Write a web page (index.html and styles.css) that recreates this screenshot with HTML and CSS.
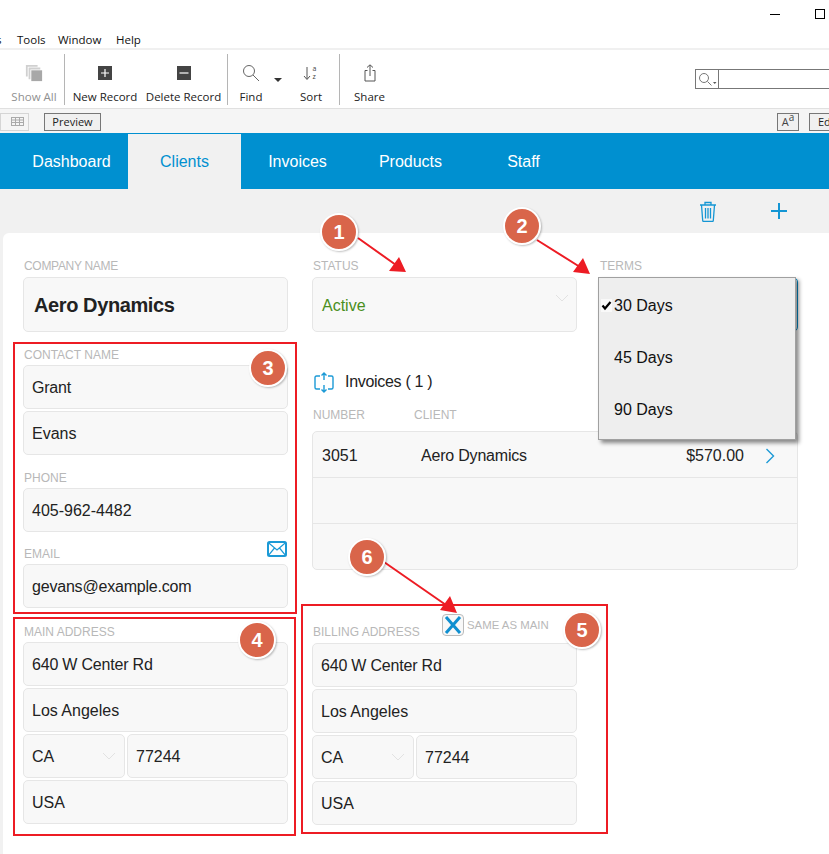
FILE: index.html
```html
<!DOCTYPE html>
<html lang="en">
<head>
    <meta charset="UTF-8">
    <meta name="viewport" content="width=device-width, initial-scale=1.0">
    <title>Clients</title>
    <link rel="stylesheet" href="styles.css">
</head>
<body>
    <div class="titlebar">
        <div class="window-controls">
            <span class="win-min"></span>
            <span class="win-max"></span>
        </div>
        <div class="menu">
            <span class="menu-cut">s</span>
            <span class="menu-tools">Tools</span>
            <span class="menu-window">Window</span>
            <span class="menu-help">Help</span>
        </div>
    </div>

    <div class="toolbar">
        <div class="tool tool-showall dim">
            <svg width="20" height="20" viewBox="0 0 20 20"><path d="M1 1h13v2H3v11H1z M4 4h13v2H6v11H4z" fill="#d0d0d0"/><rect x="7" y="7" width="12" height="12" fill="#a8a8a8"/></svg>
            <span>Show All</span>
        </div>
        <div class="tool-sep"></div>
        <div class="tool tool-new">
            <svg width="14" height="14" viewBox="0 0 14 14"><rect width="14" height="14" fill="#444"/><path d="M7 3v8M3 7h8" stroke="#fff" stroke-width="1.2"/></svg>
            <span>New Record</span>
        </div>
        <div class="tool tool-delete">
            <svg width="14" height="14" viewBox="0 0 14 14"><rect width="14" height="14" fill="#444"/><path d="M2.5 7h9" stroke="#fff" stroke-width="1.2"/></svg>
            <span>Delete Record</span>
        </div>
        <div class="tool-sep sep-find"></div>
        <div class="tool tool-find">
            <svg width="18" height="18" viewBox="0 0 18 18"><circle cx="7" cy="7" r="5.5" fill="none" stroke="#666"/><path d="M11 11l6 6" stroke="#666"/></svg>
            <span>Find</span>
        </div>
        <div class="caret"></div>
        <div class="tool tool-sort">
            <svg width="16" height="18" viewBox="0 0 16 18"><path d="M4 3v12M1 12l3 3.5L7 12" fill="none" stroke="#555"/><text x="9.5" y="7" class="sort-letter">a</text><text x="9.5" y="15" class="sort-letter">z</text></svg>
            <span>Sort</span>
        </div>
        <div class="tool-sep"></div>
        <div class="tool tool-share">
            <svg width="14" height="18" viewBox="0 0 14 18"><path d="M4.5 6.5H2v10.500h10V6.500H9.500M7 12V1M4 3.500L7 .8l3 2.700" fill="none" stroke="#555"/></svg>
            <span>Share</span>
        </div>
        <div class="quickfind">
            <div class="quickfind-icon">
                <svg width="19" height="15" viewBox="0 0 19 15"><circle cx="6" cy="6" r="4.500" fill="none" stroke="#777"/><path d="M9.500 9.500l4 4" stroke="#777"/><path d="M15 10h3.500l-1.750 2z" fill="#555"/></svg>
            </div>
        </div>
    </div>

    <div class="layoutbar">
        <div class="mode-btn mode-table">
            <svg width="13" height="9" viewBox="0 0 13 9"><path d="M0 .5h13M0 3h13M0 5.500h13M0 8.500h13M.5 0v9M4.500 0v9M8.500 0v9M12.500 0v9" stroke="#aaa" fill="none"/></svg>
        </div>
        <div class="mode-btn mode-preview">Preview</div>
        <div class="mode-btn mode-aa">A<sup>a</sup></div>
        <div class="mode-btn mode-edit">Edit</div>
    </div>

    <nav class="nav">
        <a class="nav-tab">Dashboard</a>
        <a class="nav-tab active">Clients</a>
        <a class="nav-tab">Invoices</a>
        <a class="nav-tab">Products</a>
        <a class="nav-tab">Staff</a>
    </nav>

    <div class="actions">
        <svg class="action-trash" width="18" height="21" viewBox="0 0 18 21"><path d="M1 4h16M6 4V1.500h6V4M2.500 4l1.200 15.500q.1 1 1 1h8.600q.9 0 1-1L15.500 4M6.500 7v10.500M9 7v10.500M11.500 7v10.500" fill="none" stroke="#1496d4" stroke-width="1.300"/></svg>
        <svg class="action-plus" width="16" height="16" viewBox="0 0 16 16"><path d="M8 0v16M0 8h16" stroke="#1496d4" stroke-width="2"/></svg>
    </div>

    <main class="card">
        <section class="col-left">
            <div class="label label-company">Company Name</div>
            <div class="field field-lg company">Aero Dynamics</div>

            <div class="label label-contact">Contact Name</div>
            <div class="stack">
                <div class="field tight">Grant</div>
                <div class="field">Evans</div>
            </div>

            <div class="label label-contact">Phone</div>
            <div class="field">405-962-4482</div>

            <div class="label-row">
                <div class="label">Email</div>
                <svg class="mail-icon" width="20" height="16" viewBox="0 0 20 16"><rect x="1" y="1" width="18" height="14" rx="1.500" fill="none" stroke="#1c9ad6" stroke-width="2"/><path d="M1.500 1.800L10 9l8.500-7.200M1.500 14.300L7.500 7M18.500 14.300L12.500 7" fill="none" stroke="#1c9ad6" stroke-width="1.200"/></svg>
            </div>
            <div class="field tight">gevans@example.com</div>

            <div class="label label-address">Main Address</div>
            <div class="stack">
                <div class="field tight">640 W Center Rd</div>
                <div class="field">Los Angeles</div>
                <div class="state-row">
                    <div class="field field-select state">CA <svg class="chevron" width="14" height="8" viewBox="0 0 14 8"><path d="M1 1l6 6 6-6" fill="none" stroke="#e2e2e2"/></svg></div>
                    <div class="field zip">77244</div>
                </div>
                <div class="field">USA</div>
            </div>
        </section>

        <section class="col-right">
            <div class="top-row">
                <div class="status">
                    <div class="label">Status</div>
                    <div class="field field-lg field-select active-text">Active <svg class="chevron" width="14" height="8" viewBox="0 0 14 8"><path d="M1 1l6 6 6-6" fill="none" stroke="#e2e2e2"/></svg></div>
                </div>
                <div class="terms">
                    <div class="label label-terms">Terms</div>
                    <div class="field field-lg terms-field"></div>
                    <div class="dropdown">
                        <div class="dropdown-item">
                            <svg class="check" width="11" height="13" viewBox="0 0 11 13"><rect width="11" height="13" fill="#f9f9f9"/><path d="M1.500 6.500l2.500 3L9.500 3" fill="none" stroke="#000" stroke-width="2.200"/></svg>
                            30 Days
                        </div>
                        <div class="dropdown-item">45 Days</div>
                        <div class="dropdown-item">90 Days</div>
                    </div>
                </div>
            </div>

            <div class="invoices-head">
                <svg width="20" height="21" viewBox="0 0 20 21"><path d="M6 4H2.500Q1 4 1 5.500v10Q1 17 2.500 17H6M14 4h3.500Q19 4 19 5.500v10q0 1.500-1.500 1.500H14M10 1v7M7.500 3.500L10 1l2.500 2.500M10 13v7M7.500 17.500L10 20l2.500-2.500" fill="none" stroke="#1c9ad6" stroke-width="1.400"/></svg>
                <span>Invoices ( 1 )</span>
            </div>
            <div class="invoice-cols">
                <div class="label col-number">Number</div>
                <div class="label">Client</div>
            </div>
            <div class="invoice-table">
                <div class="invoice-row">
                    <span class="inv-number">3051</span>
                    <span class="inv-client">Aero Dynamics</span>
                    <span class="inv-amount">$570.00</span>
                    <svg class="inv-arrow" width="10" height="16" viewBox="0 0 10 16"><path d="M1.500 1l7 7-7 7" fill="none" stroke="#1c9ad6" stroke-width="1.400"/></svg>
                </div>
                <div class="invoice-row"></div>
                <div class="invoice-row"></div>
            </div>

            <div class="billing">
                <div class="billing-head">
                    <div class="label billing-label">Billing Address</div>
                    <div class="same-box">
                        <svg width="18" height="18" viewBox="0 0 18 18"><path d="M2 1l14 16M16 1L2 17" stroke="#0f8fd0" stroke-width="3"/></svg>
                    </div>
                    <div class="same-text">Same as Main</div>
                </div>
                <div class="stack">
                    <div class="field tight">640 W Center Rd</div>
                    <div class="field">Los Angeles</div>
                    <div class="state-row">
                        <div class="field field-select state">CA <svg class="chevron" width="14" height="8" viewBox="0 0 14 8"><path d="M1 1l6 6 6-6" fill="none" stroke="#e2e2e2"/></svg></div>
                        <div class="field zip">77244</div>
                    </div>
                    <div class="field">USA</div>
                </div>
            </div>
        </section>
    </main>

    <!-- callouts drawn over the screen -->
    <div class="redbox redbox-3"></div>
    <div class="redbox redbox-4"></div>
    <div class="redbox redbox-5"></div>
    <svg class="arrows" width="829" height="854" viewBox="0 0 829 854">
        <path d="M358 238L396 265M537 240L580 267M384 562L446 605" stroke="#ed1c24" stroke-width="2"/>
        <path d="M406 272L389 271L399 257Z M590 274L573 272L583 258Z M457 613L440 610L450 596Z" fill="#ed1c24"/>
    </svg>
    <div class="badge badge-1">1</div>
    <div class="badge badge-2">2</div>
    <div class="badge badge-3">3</div>
    <div class="badge badge-4">4</div>
    <div class="badge badge-5">5</div>
    <div class="badge badge-6">6</div>
</body>
</html>
```

FILE: styles.css
```css
html, body {
    margin: 0;
    padding: 0;
}
body {
    position: relative;
    width: 829px;
    height: 854px;
    overflow: hidden;
    background-color: #f1f1f1;
    font-family: "Liberation Sans", Arial, sans-serif;
    font-size: 16px;
    color: #222;
}

/* window chrome */
.titlebar {
    position: relative;
    height: 48px;
    border-bottom: 2px solid #f0f0f0;
    background-color: #fff;
}
.window-controls {
    display: flex;
    justify-content: flex-end;
    align-items: center;
    height: 28px;
    padding-right: 4px;
}
.win-min {
    width: 10px;
    height: 1px;
    background-color: #000;
    margin-right: 35px;
}
.win-max {
    width: 8px;
    height: 8px;
    border: 1px solid #000;
}
.menu {
    display: flex;
    font-family: "Open Sans", sans-serif;
    font-size: 11.5px;
    line-height: 16px;
    color: #111;
    padding-top: 4px;
}
.menu-cut {
    margin-left: -4px;
    width: 21px;
}
.menu-tools {
    width: 41px;
}
.menu-window {
    width: 58px;
}

/* toolbar */
.toolbar {
    display: flex;
    height: 58px;
    padding-left: 4px;
    border-bottom: 1px solid #e0e0e0;
    background-color: #fff;
    font-family: "Open Sans", sans-serif;
    font-size: 11.5px;
    color: #222;
}
.tool {
    display: flex;
    flex-direction: column;
    align-items: center;
    flex-shrink: 0;
    height: 58px;
    white-space: nowrap;
}
.tool svg {
    margin-top: 14px;
    height: 18px;
}
.tool span {
    position: absolute;
    top: 89px;
}
.tool.dim {
    color: #909090;
}
.tool-sep {
    width: 1px;
    height: 51px;
    margin-top: 4px;
    background-color: #b5b5b5;
    flex-shrink: 0;
}
.tool-showall { width: 60px; }
.tool-new { width: 80px; }
.tool-delete { width: 77px; }
.sep-find { margin-left: 5px; }
.tool-find { width: 46px; }
.tool-sort { width: 56px; }
.tool-share { width: 59px; }
.caret {
    width: 9px;
    flex-shrink: 0;
    position: relative;
}
.caret::after {
    content: "";
    position: absolute;
    left: 0;
    top: 28px;
    border-left: 4px solid transparent;
    border-right: 4px solid transparent;
    border-top: 4px solid #333;
}
.sort-letter {
    font-size: 7px;
    fill: #444;
}
.quickfind {
    display: flex;
    flex-shrink: 0;
    width: 138px;
    height: 18px;
    margin: 19px -6px 0 auto;
    border: 1px solid #777;
}
.quickfind-icon {
    width: 23px;
    height: 18px;
    border-right: 1px solid #777;
    padding-left: 2px;
    box-sizing: border-box;
}
.quickfind-icon svg {
    display: block;
    margin-top: 2px;
}

/* layout bar */
.layoutbar {
    display: flex;
    height: 24px;
    background-color: #f5f5f5;
    padding-top: 4px;
    box-sizing: border-box;
}
.mode-btn {
    height: 18px;
    box-sizing: border-box;
    border: 1px solid #777;
    font-family: "Open Sans", sans-serif;
    font-size: 11px;
    line-height: 16px;
    text-align: center;
    background-color: #f0f0f0;
    flex-shrink: 0;
    white-space: nowrap;
    overflow: hidden;
}
.mode-table {
    width: 29px;
    margin-right: 15px;
    border-color: #d5d5d5;
    padding-left: 3px;
    text-align: left;
    background-color: #f5f5f5;
}
.mode-table svg {
    display: block;
    margin: 3px 0 0 7px;
}
.mode-preview {
    width: 57px;
}
.mode-aa {
    width: 22px;
    margin-left: 676px;
    color: #444;
}
.mode-aa sup {
    font-size: 10px;
    line-height: 0;
}
.mode-edit {
    width: 40px;
    margin-left: 10px;
    text-align: left;
    padding-left: 8px;
}

/* nav */
.nav {
    display: flex;
    height: 56px;
    padding-left: 15px;
    background-color: #0090d0;
}
.nav-tab {
    width: 113px;
    height: 56px;
    line-height: 58px;
    text-align: center;
    color: #fff;
}
.nav-tab.active {
    height: 55px;
    margin-top: 1px;
    line-height: 56px;
    background-color: #f1f1f1;
    color: #0090d0;
}

.actions {
    display: flex;
    justify-content: flex-end;
    align-items: center;
    gap: 54px;
    height: 44px;
    padding-right: 42px;
    background-color: #f1f1f1;
}

/* card */
.card {
    display: grid;
    grid-template-columns: 265px 486px;
    column-gap: 24px;
    margin-left: 3px;
    padding: 26px 0 0 20px;
    height: 600px;
    background-color: #fff;
    border-radius: 6px 0 0 0;
}
.label {
    height: 14px;
    margin-left: 1px;
    margin-bottom: 4px;
    font-size: 12px;
    line-height: 14px;
    color: #b8b8b8;
    text-transform: uppercase;
}
.label-company {
    letter-spacing: -0.3px;
}
.label-terms {
    margin-left: 0;
}
.label-contact {
    margin-top: 16px;
    margin-bottom: 3px;
}
.label-address {
    margin-top: 17px;
    margin-bottom: 3px;
}
.label-row {
    display: flex;
    justify-content: space-between;
    align-items: flex-end;
    margin-top: 15px;
    margin-bottom: 3px;
    height: 14px;
}
.label-row .label {
    margin-bottom: 0;
}
.mail-icon {
    margin: 0 1px 4px 0;
}
.field {
    display: flex;
    align-items: center;
    position: relative;
    height: 44px;
    padding: 2px 0 0 8px;
    box-sizing: border-box;
    background-color: #f8f8f8;
    border: 1px solid #e6e6e6;
    border-radius: 5px;
    white-space: nowrap;
}
.field-lg {
    height: 55px;
    padding-left: 9px;
}
.tight {
    letter-spacing: -0.2px;
}
.company {
    padding-left: 10px;
    font-size: 20px;
    font-weight: bold;
    letter-spacing: -0.4px;
}
.stack {
    display: flex;
    flex-direction: column;
    gap: 2px;
}
.state-row {
    display: flex;
    gap: 2px;
}
.state {
    width: 102px;
}
.zip {
    flex: 1;
}
.chevron {
    position: absolute;
    right: 8px;
    top: 17px;
}
.field-lg .chevron {
    top: 16px;
    right: 7px;
}
.active-text {
    color: #4a8f20;
}

/* right column */
.top-row {
    display: flex;
    gap: 23px;
}
.status {
    width: 265px;
}
.terms {
    position: relative;
    width: 198px;
}
.terms-field {
    border-color: #0090d0;
}
.dropdown {
    position: absolute;
    left: -2px;
    top: 18px;
    width: 198px;
    height: 163px;
    box-sizing: border-box;
    background-color: #eee;
    border: 1px solid #a0a0a0;
    box-shadow: 3px 3px 4px rgba(0, 0, 0, 0.45);
}
.dropdown-item {
    position: relative;
    height: 52px;
    line-height: 52px;
    padding-left: 15px;
    color: #111;
}
.dropdown-item:first-child {
    margin-top: 2px;
}
.check {
    position: absolute;
    left: 2px;
    top: 19px;
}
.invoices-head {
    display: flex;
    align-items: center;
    gap: 11px;
    height: 20px;
    margin-top: 40px;
    padding-left: 2px;
    letter-spacing: -0.3px;
}
.invoice-cols {
    display: flex;
    margin-top: 16px;
    margin-bottom: 9px;
}
.invoice-cols .label {
    margin-bottom: 0;
}
.col-number {
    width: 100px;
}
.invoice-table {
    height: 139px;
    box-sizing: border-box;
    background-color: #f8f8f8;
    border: 1px solid #e6e6e6;
    border-radius: 5px;
}
.invoice-row {
    display: flex;
    align-items: center;
    height: 46px;
    border-bottom: 1px solid #e6e6e6;
    box-sizing: border-box;
    padding: 2px 0 0 9px;
}
.invoice-row:last-child {
    border-bottom: none;
}
.inv-number {
    width: 99px;
}
.inv-client {
    width: 220px;
    letter-spacing: -0.2px;
}
.inv-amount {
    width: 103px;
    text-align: right;
}
.inv-arrow {
    margin-left: 21px;
}
.billing {
    width: 265px;
    margin-top: 44px;
}
.billing-head {
    display: flex;
    align-items: flex-start;
    height: 25px;
    margin-bottom: 4px;
}
.billing-label {
    width: 129px;
    margin-top: 11px;
    margin-bottom: 0;
    white-space: nowrap;
}
.same-box {
    display: flex;
    align-items: center;
    justify-content: center;
    width: 22px;
    height: 22px;
    box-sizing: border-box;
    border: 1px solid #bbb;
    border-radius: 4px;
    background-color: #f8f8f8;
}
.same-text {
    margin: 4px 0 0 3px;
    font-size: 11.4px;
    line-height: 14px;
    color: #b8b8b8;
    text-transform: uppercase;
    white-space: nowrap;
}

/* callouts */
.redbox {
    position: absolute;
    box-sizing: border-box;
    border: 2px solid #ed1c24;
}
.redbox-3 { left: 13px; top: 342px; width: 284px; height: 272px; }
.redbox-4 { left: 13px; top: 617px; width: 283px; height: 219px; }
.redbox-5 { left: 301px; top: 604px; width: 307px; height: 230px; }
.arrows {
    position: absolute;
    left: 0;
    top: 0;
}
.badge {
    position: absolute;
    width: 34px;
    height: 34px;
    box-sizing: content-box;
    border: 2px solid #fff;
    border-radius: 50%;
    background-color: #d9654a;
    box-shadow: 1px 1px 2px rgba(0, 0, 0, 0.25);
    color: #fff;
    font-size: 20px;
    font-weight: bold;
    line-height: 34px;
    text-align: center;
}
.badge-1 { left: 320px; top: 213px; }
.badge-2 { left: 503px; top: 207px; }
.badge-3 { left: 249px; top: 349px; }
.badge-4 { left: 238px; top: 621px; }
.badge-5 { left: 563px; top: 611px; }
.badge-6 { left: 348px; top: 538px; }
```
